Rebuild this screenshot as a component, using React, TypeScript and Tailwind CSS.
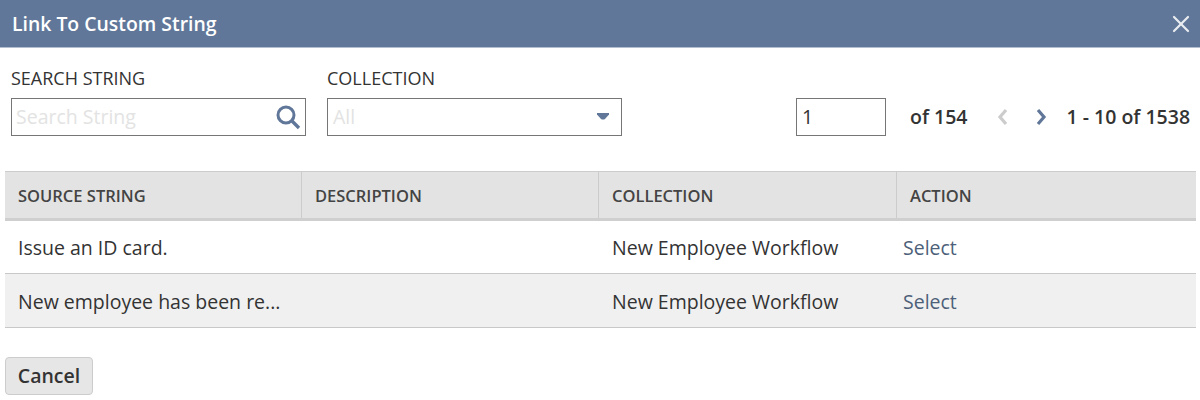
import { X } from "lucide-react";

const rows = [
  { source: "Issue an ID card.", collection: "New Employee Workflow", shaded: false, h: "h-[53px]" },
  { source: "New employee has been re...", collection: "New Employee Workflow", shaded: true, h: "h-[54px]" },
];

export default function App() {
  return (
    <div className="w-[1200px] h-[400px] overflow-hidden bg-white font-['Open_Sans',sans-serif] text-[#333]">
      {/* Title bar */}
      <div className="flex h-[48px] items-center justify-between border-b border-[#b3bfd0] bg-[#607799] pl-3 pr-[5px]">
        <span className="text-[19.4px] font-semibold text-white">Link To Custom String</span>
        <X className="h-[28px] w-[28px] text-[#e8ebf0]" strokeWidth={1.9} />
      </div>

      {/* Filters */}
      <div className="flex items-end pl-[11px] pt-[19px]">
        <div className="w-[295px]">
          <div className="mb-[9px] h-[22px] text-[18px] leading-[22px]">SEARCH STRING</div>
          <div className="flex h-[38px] items-center justify-between border border-[#767676] pl-[4px] pr-[4px]">
            <span className="text-[19.5px] text-[#e3e3e3]">Search String</span>
            <svg width="26" height="26" viewBox="0 0 26 26">
              <circle cx="11" cy="11" r="8" fill="none" stroke="#607799" strokeWidth="3" />
              <path d="M16.5 16.5 L24 24" stroke="#607799" strokeWidth="3.4" />
            </svg>
          </div>
        </div>
        <div className="ml-[21px] w-[295px]">
          <div className="mb-[9px] h-[22px] text-[18px] leading-[22px]">COLLECTION</div>
          <div className="flex h-[38px] items-center justify-between border border-[#767676] pl-[5px] pr-[12px]">
            <span className="text-[19.5px] text-[#e3e3e3]">All</span>
            <svg width="12" height="7" viewBox="0 0 12 7" className="mt-[-1px]">
              <path d="M0 0 H12 V1.5 L8 6 Q6 7 4 6 L0 1.5 Z" fill="#607799" />
            </svg>
          </div>
        </div>
        <div className="ml-[174px] flex h-[38px] items-center">
          <div className="flex h-[38px] w-[90px] items-center border border-[#767676] pl-[5px] text-[19.5px]">1</div>
          <span className="ml-[24px] text-[19.5px] font-semibold">of 154</span>
          <svg width="11" height="18" viewBox="0 0 11 18" className="ml-[30px]">
            <path d="M9 2 L3 9 L9 16" fill="none" stroke="#cccccc" strokeWidth="3.2" />
          </svg>
          <svg width="11" height="18" viewBox="0 0 11 18" className="ml-[28px]">
            <path d="M2 2 L8 9 L2 16" fill="none" stroke="#607799" strokeWidth="3.2" />
          </svg>
          <span className="ml-[19px] whitespace-nowrap text-[19.5px] font-semibold">1 - 10 of 1538</span>
        </div>
      </div>

      {/* Table */}
      <div className="ml-[5px] mt-[35px] w-[1191px]">
        <div className="flex h-[50px] items-center border-b-[3px] border-t border-b-[#cfcfcf] border-t-[#cccccc] bg-[#e3e3e3] text-[16.5px] font-semibold text-[#444]">
          <div className="flex h-full w-[297px] items-center border-r border-[#cccccc] pl-[13px] pt-[2px]">SOURCE STRING</div>
          <div className="flex h-full w-[297px] items-center border-r border-[#cccccc] pl-[13px] pt-[2px]">DESCRIPTION</div>
          <div className="flex h-full w-[298px] items-center border-r border-[#cccccc] pl-[13px] pt-[2px]">COLLECTION</div>
          <div className="flex h-full flex-1 items-center pl-[13px] pt-[2px]">ACTION</div>
        </div>
        {rows.map((row) => (
          <div
            key={row.source}
            className={`flex items-center border-b border-[#c8c8c8] pt-[2px] text-[19.5px] ${row.h} ${row.shaded ? "bg-[#f0f0f0]" : "bg-white"}`}
          >
            <div className="w-[297px] pl-[13px]">{row.source}</div>
            <div className="w-[297px]" />
            <div className="w-[298px] pl-[13px]">{row.collection}</div>
            <div className="flex-1 pl-[6px] text-[#4d5f79]">Select</div>
          </div>
        ))}
      </div>

      {/* Footer */}
      <div className="pl-[5px] pt-[29px]">
        <button className="flex h-[38px] w-[88px] items-center justify-center rounded-[4px] border border-[#cccccc] bg-[#e6e6e6] text-[19.5px] font-semibold">
          Cancel
        </button>
      </div>
    </div>
  );
}
